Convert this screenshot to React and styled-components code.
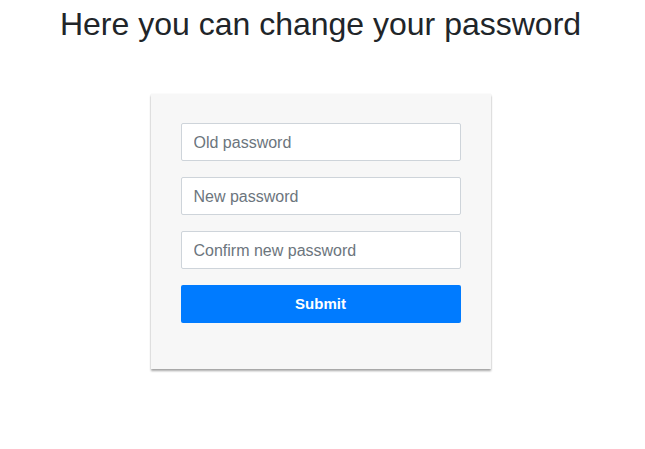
import React from "react";
import styled, { createGlobalStyle } from "styled-components";

const GlobalStyle = createGlobalStyle`
  body {
    margin: 0;
    background: #ffffff;
    font-family: "Liberation Sans", Arial, sans-serif;
    color: #212529;
  }
`;

const Page = styled.div`
  display: flex;
  flex-direction: column;
  align-items: center;
  min-height: 100vh;
  padding-right: 4px;
`;

const Title = styled.h1`
  margin: 5px 0 0;
  font-size: 32px;
  font-weight: 400;
  line-height: 38px;
  color: #212529;
`;

const Card = styled.form`
  margin-top: 51px;
  width: 340px;
  box-sizing: border-box;
  padding: 29px 30px 46px;
  background: #f7f7f7;
  box-shadow: 0 2px 2px rgba(0, 0, 0, 0.35), 0 0 1px rgba(0, 0, 0, 0.1);
  display: flex;
  flex-direction: column;
  gap: 16px;
`;

const Field = styled.input`
  height: 38px;
  box-sizing: border-box;
  padding: 2px 12px 0;
  border: 1px solid #ced4da;
  border-radius: 2px;
  background: #fff;
  font-family: "Liberation Sans", Arial, sans-serif;
  font-size: 16px;
  color: #495057;
  outline: none;

  &::placeholder {
    color: #6c757d;
  }
`;

const Button = styled.button`
  height: 38px;
  padding: 0 0 2px;
  border: none;
  border-radius: 2px;
  background: #007bff;
  color: #fff;
  font-family: "Liberation Sans", Arial, sans-serif;
  font-size: 15px;
  font-weight: 700;
  cursor: pointer;
`;

export default function App() {
  return (
    <>
      <GlobalStyle />
      <Page>
        <Title>Here you can change your password</Title>
        <Card onSubmit={e => e.preventDefault()}>
          <Field type="password" placeholder="Old password" />
          <Field type="password" placeholder="New password" />
          <Field type="password" placeholder="Confirm new password" />
          <Button type="submit">Submit</Button>
        </Card>
      </Page>
    </>
  );
}
